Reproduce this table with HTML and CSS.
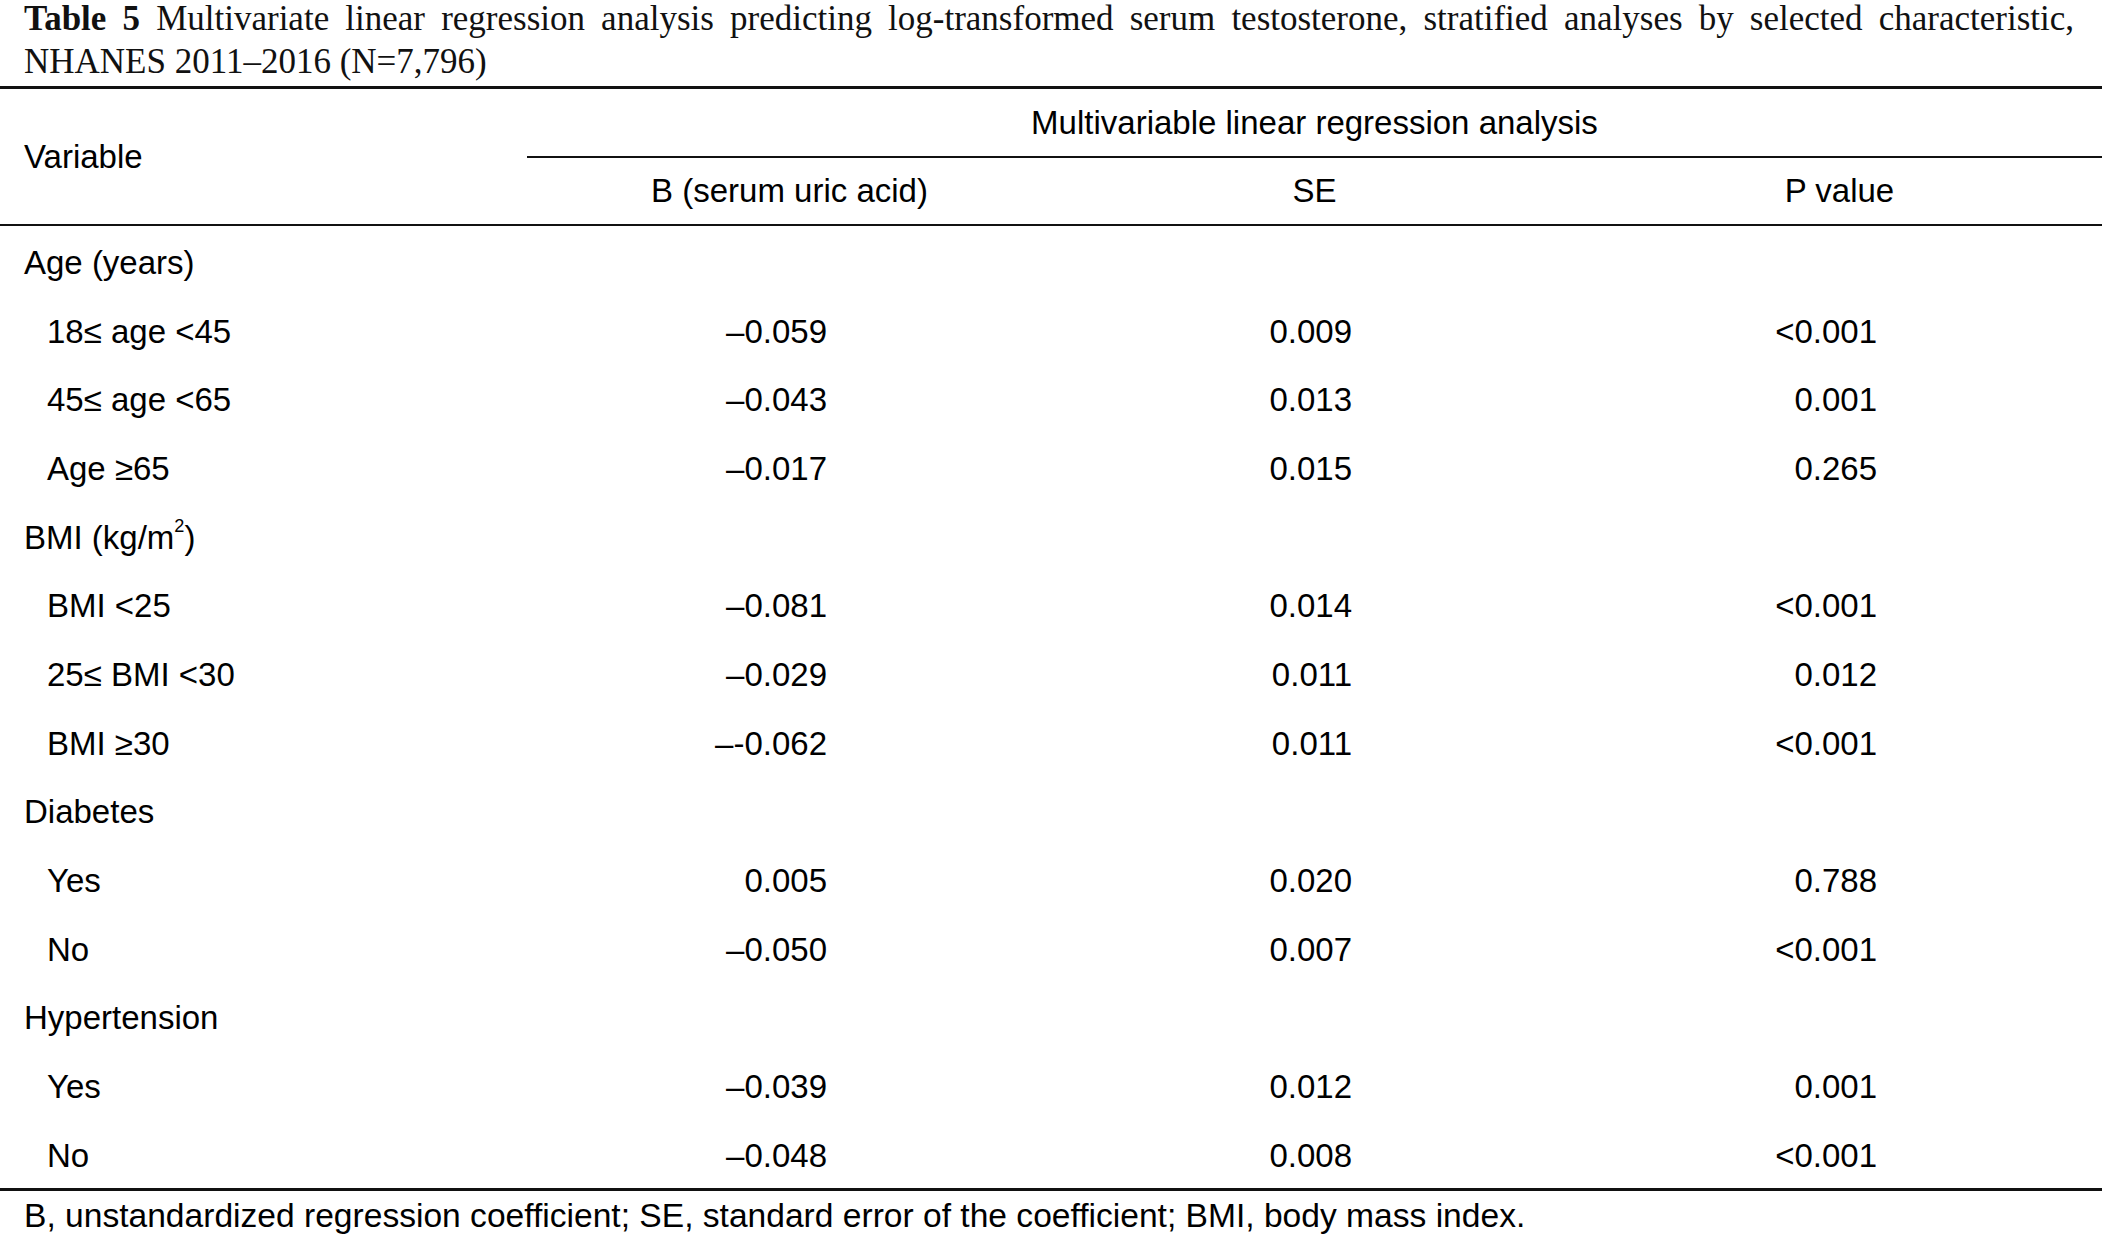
FILE: index.html
```html
<!DOCTYPE html>
<html lang="en">
<head>
<meta charset="utf-8">
<title>Table 5</title>
<link rel="stylesheet" href="styles.css">
</head>
<body>
<div class="page">
  <div class="caption">
    <div class="cap-line1"><b>Table 5</b> Multivariate linear regression analysis predicting log-transformed serum testosterone, stratified analyses by selected characteristic,</div>
    <div class="cap-line2">NHANES 2011–2016 (N=7,796)</div>
  </div>
  <div class="table">
    <div class="h-var">Variable</div>
    <div class="h-span">Multivariable linear regression analysis</div>
    <div class="h-col">B (serum uric acid)</div>
    <div class="h-col">SE</div>
    <div class="h-col">P value</div>

    <div class="c-group">Age (years)</div><div class="c-num"></div><div class="c-num"></div><div class="c-num"></div>
    <div class="c-sub">18≤ age &lt;45</div><div class="c-num">–0.059</div><div class="c-num">0.009</div><div class="c-num">&lt;0.001</div>
    <div class="c-sub">45≤ age &lt;65</div><div class="c-num">–0.043</div><div class="c-num">0.013</div><div class="c-num">0.001</div>
    <div class="c-sub">Age ≥65</div><div class="c-num">–0.017</div><div class="c-num">0.015</div><div class="c-num">0.265</div>
    <div class="c-group">BMI (kg/m<sup>2</sup>)</div><div class="c-num"></div><div class="c-num"></div><div class="c-num"></div>
    <div class="c-sub">BMI &lt;25</div><div class="c-num">–0.081</div><div class="c-num">0.014</div><div class="c-num">&lt;0.001</div>
    <div class="c-sub">25≤ BMI &lt;30</div><div class="c-num">–0.029</div><div class="c-num">0.011</div><div class="c-num">0.012</div>
    <div class="c-sub">BMI ≥30</div><div class="c-num">–-0.062</div><div class="c-num">0.011</div><div class="c-num">&lt;0.001</div>
    <div class="c-group">Diabetes</div><div class="c-num"></div><div class="c-num"></div><div class="c-num"></div>
    <div class="c-sub">Yes</div><div class="c-num">0.005</div><div class="c-num">0.020</div><div class="c-num">0.788</div>
    <div class="c-sub">No</div><div class="c-num">–0.050</div><div class="c-num">0.007</div><div class="c-num">&lt;0.001</div>
    <div class="c-group">Hypertension</div><div class="c-num"></div><div class="c-num"></div><div class="c-num"></div>
    <div class="c-sub">Yes</div><div class="c-num">–0.039</div><div class="c-num">0.012</div><div class="c-num">0.001</div>
    <div class="c-sub">No</div><div class="c-num">–0.048</div><div class="c-num">0.008</div><div class="c-num">&lt;0.001</div>
  </div>
  <div class="footnote">B, unstandardized regression coefficient; SE, standard error of the coefficient; BMI, body mass index.</div>
</div>
</body>
</html>
```

FILE: styles.css
```css
* { box-sizing: border-box; }
html, body { margin: 0; padding: 0; background: #fff; }
body { color: #000; }
.page { width: 2102px; }

.caption {
  font-family: "Liberation Serif", "Times New Roman", serif;
  font-size: 35px;
  color: #111;
  padding-left: 24px;
  width: 2074px;
}
.cap-line1 {
  line-height: 38px;
  text-align: justify;
  text-align-last: justify;
  white-space: nowrap;
}
.cap-line2 {
  line-height: 48px;
}

.table {
  display: grid;
  grid-template-columns: 527px repeat(3, 525px);
  grid-template-rows: 69px 68px;
  grid-auto-rows: 68.7px;
  border-top: 3px solid #111;
  border-bottom: 3px solid #111;
  font-family: "Liberation Sans", Arial, Helvetica, sans-serif;
  font-size: 33px;
}
.h-var {
  grid-row: 1 / span 2;
  grid-column: 1;
  display: flex;
  align-items: center;
  padding-left: 24px;
  border-bottom: 2px solid #111;
}
.h-span {
  grid-column: 2 / span 3;
  display: flex;
  align-items: center;
  justify-content: center;
  border-bottom: 2px solid #111;
}
.h-col {
  display: flex;
  align-items: center;
  justify-content: center;
  border-bottom: 2px solid #111;
}
.c-group, .c-sub, .c-num {
  display: flex;
  align-items: center;
  padding-top: 5px;
}
.c-group { padding-left: 24px; }
.c-sub { padding-left: 47px; }
.c-num { justify-content: flex-end; padding-right: 225px; }
sup {
  font-size: 0.55em;
  line-height: 0;
  vertical-align: baseline;
  position: relative;
  top: -0.62em;
}

.footnote {
  font-family: "Liberation Sans", Arial, Helvetica, sans-serif;
  font-size: 33.6px;
  padding: 6px 0 0 24px;
}
```
